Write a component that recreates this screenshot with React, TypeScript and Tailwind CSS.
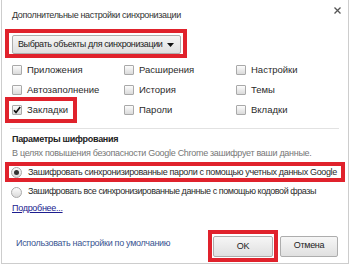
import React from "react";

function Checkbox({ checked = false }: { checked?: boolean }) {
  return (
    <span className="flex h-[10px] w-[10px] shrink-0 items-center justify-center rounded-[1px] border border-[#a9a9a9] bg-linear-to-b from-[#fcfcfc] to-[#dadada]">
      {checked && (
        <svg width="8" height="8" viewBox="0 0 8 8">
          <path d="M1 4.2 L3 6.4 L7.2 1" fill="none" stroke="#111" strokeWidth="1.7" />
        </svg>
      )}
    </span>
  );
}

function Radio({ checked = false }: { checked?: boolean }) {
  return (
    <span className="flex h-[11px] w-[11px] shrink-0 items-center justify-center rounded-full border border-[#a9a9a9] bg-linear-to-b from-[#fcfcfc] to-[#dadada]">
      {checked && <span className="h-[5px] w-[5px] rounded-full bg-[#333]" />}
    </span>
  );
}

function CheckItem({ label, checked }: { label: string; checked?: boolean }) {
  return (
    <div className="flex h-[20px] items-center gap-[5px]">
      <Checkbox checked={checked} />
      <span>{label}</span>
    </div>
  );
}

export default function App() {
  return (
    <div className="h-[265px] w-[350px] overflow-hidden whitespace-nowrap bg-white font-['Liberation_Sans',Arial,sans-serif] text-[9px] tracking-[-0.3px] text-[#2b2b2b]">
      <div className="ml-[1px] flex h-[264px] w-[348px] flex-col border-x border-b border-[#cdcdcd]">
        {/* Title */}
        <div className="flex h-[29px] items-start justify-between pl-[10px] pr-[7px]">
          <span className="mt-[9px] tracking-[-0.35px] text-[#333]">Дополнительные настройки синхронизации</span>
          <svg className="mt-[7px]" width="7" height="7" viewBox="0 0 7 7">
            <path d="M0.5 0.5 L6.5 6.5 M6.5 0.5 L0.5 6.5" stroke="#555" strokeWidth="1.3" />
          </svg>
        </div>

        {/* Select */}
        <div className="ml-[3px] h-[29px] w-[182px] border-[4px] border-[#e0222c] pl-[3px] pt-[2px]">
          <button className="flex h-[19px] w-[169px] items-center justify-between rounded-[2px] border border-[#adadad] bg-linear-to-b from-[#f6f6f6] to-[#dfdfdf] pl-[5px] pr-[6px] text-[9px] tracking-[-0.4px] text-[#222]">
            <span>Выбрать объекты для синхронизации</span>
            <svg width="7" height="4" viewBox="0 0 7 4">
              <path d="M0 0 L7 0 L3.5 4 Z" fill="#111" />
            </svg>
          </button>
        </div>

        {/* Checkboxes */}
        <div className="mt-[2px] grid grid-cols-[112px_112px_1fr] pl-[10px] text-[9.5px] tracking-normal">
          <CheckItem label="Приложения" />
          <CheckItem label="Расширения" />
          <CheckItem label="Настройки" />
          <CheckItem label="Автозаполнение" />
          <CheckItem label="История" />
          <CheckItem label="Темы" />
          <div className="-my-[3px] -ml-[7px] flex h-[26px] w-[72px] items-center gap-[5px] border-[4px] border-[#e0222c] pl-[3px]">
            <Checkbox checked />
            <span>Закладки</span>
          </div>
          <CheckItem label="Пароли" />
          <CheckItem label="Вкладки" />
        </div>

        <div className="ml-[8px] mr-[9px] mt-[8px] h-px bg-[#e2e2e2]" />

        {/* Encryption */}
        <div className="mt-[3px] pl-[10px] font-bold leading-[14px] text-[#222]">Параметры шифрования</div>
        <div className="pl-[10px] leading-[14px] text-[#777]">
          В целях повышения безопасности Google Chrome зашифрует ваши данные.
        </div>
        <div className="ml-[3px] mt-[2px] flex h-[20px] w-[340px] items-center gap-[6px] border-[4px] border-[#e0222c] pl-[2px]">
          <Radio checked />
          <span className="leading-[12px] tracking-[-0.36px]">Зашифровать синхронизированные пароли с помощью учетных данных Google</span>
        </div>
        <div className="mt-[4px] flex h-[12px] items-center gap-[6px] pl-[9px]">
          <Radio />
          <span className="tracking-[-0.45px]">Зашифровать все синхронизированные данные с помощью кодовой фразы</span>
        </div>
        <div className="mt-[4px] pl-[10px] leading-[12px]">
          <a className="text-[#1d1d8f] underline">Подробнее...</a>
        </div>

        {/* Footer */}
        <div className="mt-[16px] flex h-[32px] items-center pr-[10px]">
          <span className="mb-[4px] ml-[14px] text-[#3a5592]">Использовать настройки по умолчанию</span>
          <div className="ml-auto h-[32px] w-[70px] border-[4px] border-[#e0222c] pl-[1px] pt-[2px]">
            <button className="h-[21px] w-[60px] rounded-[2px] border border-[#adadad] bg-linear-to-b from-[#f6f6f6] to-[#e0e0e0] text-[9px] text-[#222]">
              OK
            </button>
          </div>
          <button className="ml-[2px] h-[21px] w-[58px] rounded-[2px] border border-[#adadad] bg-linear-to-b from-[#f6f6f6] to-[#e0e0e0] text-[9px] text-[#222]">
            Отмена
          </button>
        </div>
      </div>
    </div>
  );
}
